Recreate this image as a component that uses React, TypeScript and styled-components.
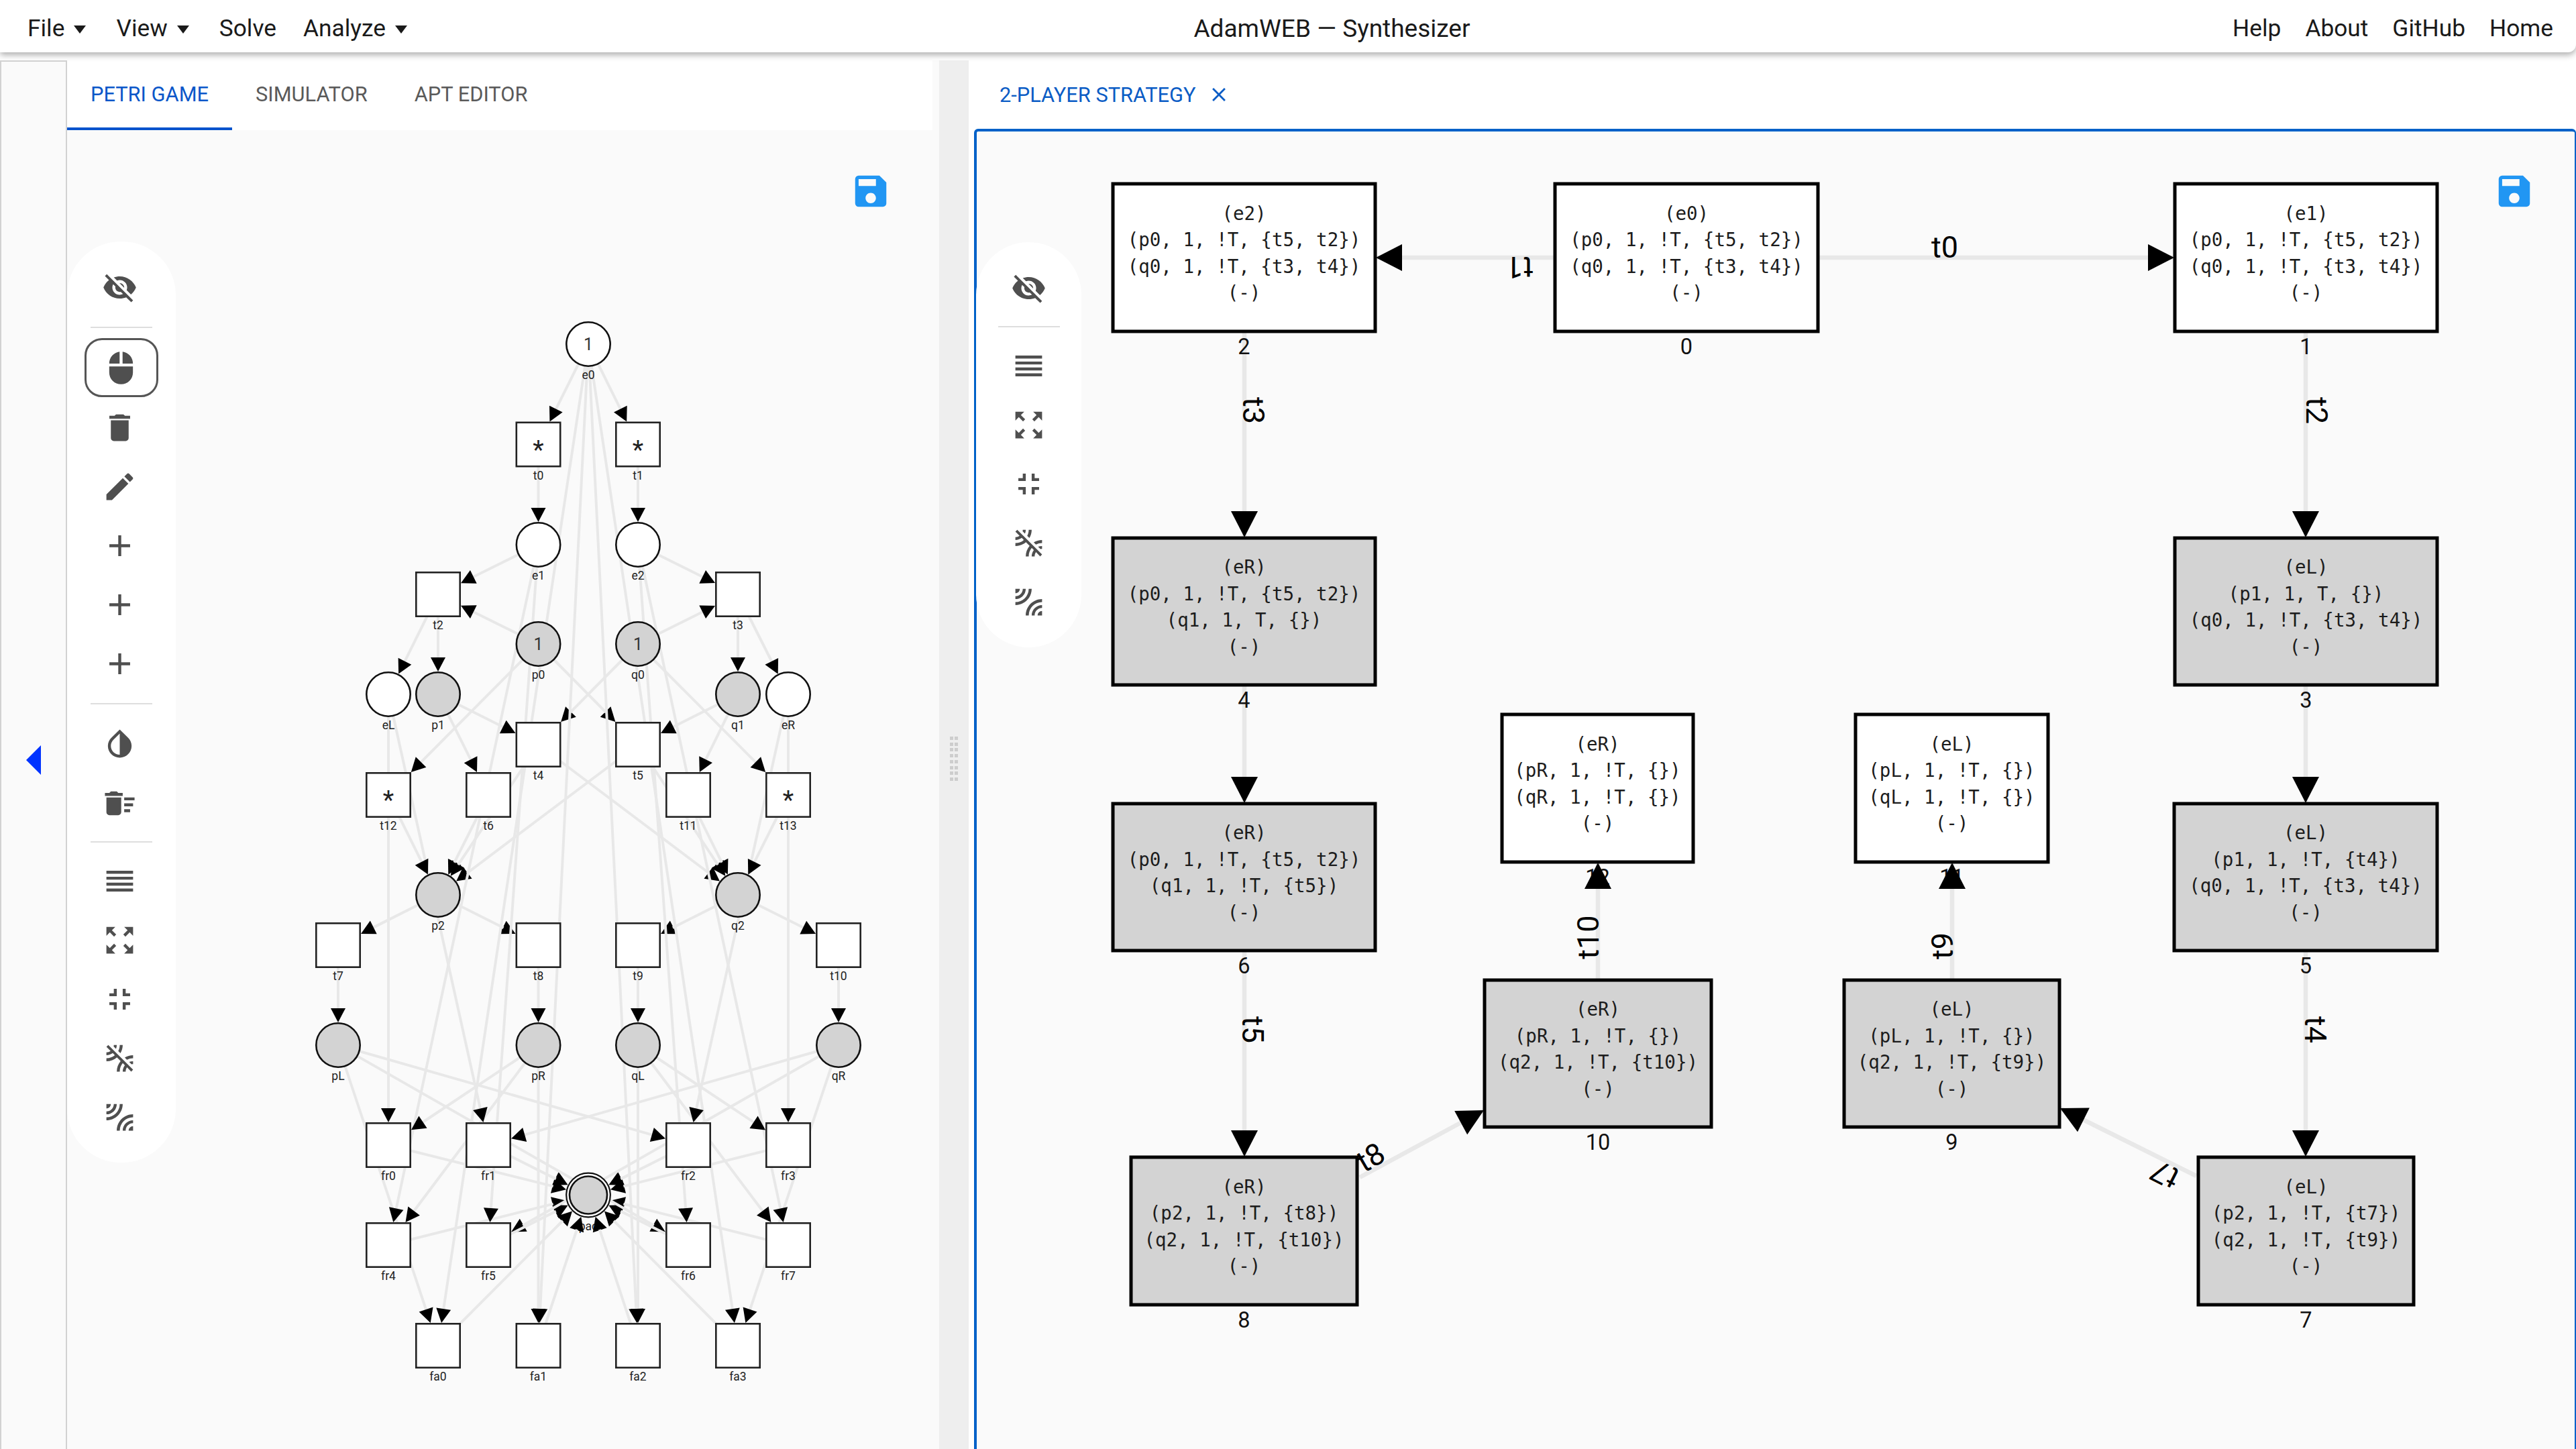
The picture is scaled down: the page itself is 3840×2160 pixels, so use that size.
import React from "react";
import styled, { createGlobalStyle } from "styled-components";
import {
  MdVisibilityOff, MdMouse, MdDelete, MdEdit, MdAdd, MdInvertColors, MdDeleteSweep,
  MdReorder, MdZoomOutMap, MdFullscreenExit, MdLeakRemove, MdLeakAdd, MdSave, MdClose,
} from "react-icons/md";

const Global = createGlobalStyle`
  html, body { margin: 0; padding: 0; width: 3840px; height: 2160px; overflow: hidden; background: #fff; }
  body { font-family: Roboto, "Liberation Sans", sans-serif; }
  #root { width: 3840px; height: 2160px; }
`;

const Page = styled.div`
  width: 3840px; height: 2160px; display: flex; flex-direction: column; overflow: hidden; background: #fff;
`;
const Header = styled.header`
  position: relative; z-index: 2; flex: 0 0 78px; box-sizing: border-box; padding: 6px 34px 0 41px;
  display: flex; align-items: center; justify-content: space-between;
  background: #fff; color: #1a1a1a; font-size: 35.3px;
  border-bottom-right-radius: 12px; box-shadow: 0 4px 10px rgba(0,0,0,.32);
`;
const MenuGroup = styled.nav<{ $gap: number }>` display: flex; align-items: center; gap: ${p => p.$gap}px; `;
const MenuItem = styled.span<{ $caret?: boolean; $after?: number }>`
  display: inline-flex; align-items: center; margin-right: ${p => p.$after ?? (p.$caret ? 8 : 0)}px;
`;
const Caret = styled.i`
  display: inline-block; margin-left: 14px; width: 0; height: 0; margin-top: 4px;
  border-left: 9px solid transparent; border-right: 9px solid transparent; border-top: 12px solid #1a1a1a;
`;
const Title = styled.span` font-size: 37px; margin-left: 28px; `;
const Body = styled.main` flex: 1; min-height: 0; display: flex; padding-top: 12px; `;
const LeftPane = styled.section` flex: 0 0 1400px; display: flex; `;
const Sidebar = styled.aside`
  flex: 0 0 100px; box-sizing: border-box; display: flex; align-items: center; justify-content: center; padding-top: 14px;
  background: #fafafa; border: 2px solid #d2d2d2; border-bottom: none;
`;
const CollapseArrow = styled.i`
  width: 0; height: 0; border-right: 22px solid #0033ff;
  border-top: 22px solid transparent; border-bottom: 22px solid transparent;
`;
const LeftColumn = styled.div` flex: 1; min-width: 0; display: flex; flex-direction: column; background: #fafafa; `;
const TabBar = styled.div<{ $h: number }>`
  flex: 0 0 ${p => p.$h}px; box-sizing: border-box; display: flex; background: #fff;
`;
const LeftTabBar = styled(TabBar)` margin-right: 10px; `;
const RightTabBar = styled(TabBar)` padding-left: 2px; `;
const Tab = styled.div<{ $active?: boolean }>`
  box-sizing: border-box; display: flex; align-items: center; gap: 24px; padding: 0 35px; font-size: 30.8px; font-weight: 400;
  color: ${p => (p.$active ? "#0b57c9" : "#5a5a5a")};
  border-bottom: 4px solid ${p => (p.$active ? "#0052cc" : "transparent")};
`;
const CleanTab = styled(Tab)` padding: 0 36px; gap: 17px; border-bottom: none; color: #0b5cc5; `;
const Canvas = styled.div`
  position: relative; flex: 1; min-height: 0; overflow: hidden; background: #fafafa;
`;
const Gutter = styled.div`
  flex: 0 0 44px; display: flex; align-items: center; justify-content: center; padding-top: 12px; background: #eeeeee;
`;
const Grip = styled.div` display: grid; grid-template-columns: 5px 5px; gap: 3.7px 2px; `;
const GripDot = styled.i` width: 5px; height: 5px; background: #cdcdcd; `;
const RightPane = styled.section` flex: 1; min-width: 0; box-sizing: border-box; padding-left: 8px; display: flex; flex-direction: column; background: #fff; `;
const RightCanvas = styled(Canvas)`
  border-top: 4px solid #0061c8; border-left: 4px solid #0061c8; border-right: 2px solid #0061c8;
  border-top-left-radius: 6px; border-top-right-radius: 6px; overflow: visible;
`;
const Toolbar = styled.div<{ $w: number; $top: number; $left: number; $nudge?: number }>`
  position: absolute; top: ${p => p.$top}px; left: ${p => p.$left}px; width: ${p => p.$w}px; box-sizing: border-box;
  padding: 24px ${p => p.$nudge ?? 0}px 24px 0; display: flex; flex-direction: column; align-items: center; background: #fff;
  border-radius: 80px; color: #4f4f4f;
`;
const ToolButton = styled.div<{ $selected?: boolean }>`
  box-sizing: border-box; width: 110px; height: 88px; display: flex; align-items: center; justify-content: center; flex: 0 0 88px;
  border-radius: 26px; border: 3px solid ${p => (p.$selected ? "#555" : "transparent")};
  margin-bottom: ${p => (p.$selected ? 1 : 0)}px;
  margin-left: ${p => (p.$selected ? 5 : 0)}px;
`;
const ToolDivider = styled.hr<{ $m?: number; $shift?: number }>`
  width: 92px; height: 2px; border: none; background: #dedede; flex: 0 0 2px;
  margin: ${p => p.$m ?? 15}px 0 ${p => p.$m ?? 15}px ${p => p.$shift ?? 0}px;
`;
const SaveButton = styled.div<{ $right: number; $top: number }>`
  position: absolute; right: ${p => p.$right}px; top: ${p => p.$top}px; color: #2196f3; line-height: 0;
`;
const Diagram = styled.svg` display: block; `;
const EdgeLine = styled.line<{ $w: number }>` stroke: #e8e8e8; stroke-width: ${p => p.$w}px; `;
const ArrowHead = styled.polygon` fill: #000; `;
const PlaceShape = styled.circle<{ $gray?: boolean }>`
  fill: ${p => (p.$gray ? "#d3d3d3" : "#fff")}; stroke: #111; stroke-width: 2.6px;
`;
const FinalRing = styled.circle` fill: #fff; stroke: #111; stroke-width: 2.2px; `;
const TransitionShape = styled.rect` fill: #fff; stroke: #222; stroke-width: 2.6px; `;
const NetLabel = styled.text`
  font-family: Roboto, sans-serif; font-size: 17.5px; fill: #222; text-anchor: middle;
`;
const NetToken = styled.text`
  font-family: Roboto, sans-serif; font-size: 25px; fill: #333; text-anchor: middle;
`;
const NetStar = styled.text`
  font-family: Roboto, sans-serif; font-size: 38px; fill: #222; text-anchor: middle;
`;
const StateBox = styled.rect<{ $gray?: boolean }>`
  fill: ${p => (p.$gray ? "#d3d3d3" : "#fff")}; stroke: #000; stroke-width: 5px;
`;
const StateLine = styled.text`
  font-family: "DejaVu Sans Mono", "Liberation Mono", monospace; font-size: 27.5px; fill: #1c1c1c; text-anchor: middle;
`;
const StateIndex = styled.text`
  font-family: Roboto, sans-serif; font-size: 32.5px; fill: #111; text-anchor: middle;
`;
const EdgeCaption = styled.text`
  font-family: Roboto, sans-serif; font-size: 45px; fill: #000; text-anchor: middle;
`;

type Kind = "c" | "s";
type NetNode = { id: string; x: number; y: number; k: Kind; gray?: boolean; text?: string };
const X = { a: 504, b: 579, c: 653, d: 728, e: 802.5, f: 877, g: 951, h: 1026, i: 1100, j: 1175, k: 1250 };
const netNodes: NetNode[] = [
  { id: "e0", x: X.f, y: 513, k: "c", text: "1" },
  { id: "t0", x: X.e, y: 662.5, k: "s", text: "*" }, { id: "t1", x: X.g, y: 662.5, k: "s", text: "*" },
  { id: "e1", x: X.e, y: 812, k: "c" }, { id: "e2", x: X.g, y: 812, k: "c" },
  { id: "t2", x: X.c, y: 886, k: "s" }, { id: "t3", x: X.i, y: 886, k: "s" },
  { id: "p0", x: X.e, y: 960, k: "c", gray: true, text: "1" }, { id: "q0", x: X.g, y: 960, k: "c", gray: true, text: "1" },
  { id: "eL", x: X.b, y: 1035, k: "c" }, { id: "p1", x: X.c, y: 1035, k: "c", gray: true },
  { id: "q1", x: X.i, y: 1035, k: "c", gray: true }, { id: "eR", x: X.j, y: 1035, k: "c" },
  { id: "t4", x: X.e, y: 1110, k: "s" }, { id: "t5", x: X.g, y: 1110, k: "s" },
  { id: "t12", x: X.b, y: 1185, k: "s", text: "*" }, { id: "t6", x: X.d, y: 1185, k: "s" },
  { id: "t11", x: X.h, y: 1185, k: "s" }, { id: "t13", x: X.j, y: 1185, k: "s", text: "*" },
  { id: "p2", x: X.c, y: 1334, k: "c", gray: true }, { id: "q2", x: X.i, y: 1334, k: "c", gray: true },
  { id: "t7", x: X.a, y: 1409, k: "s" }, { id: "t8", x: X.e, y: 1409, k: "s" },
  { id: "t9", x: X.g, y: 1409, k: "s" }, { id: "t10", x: X.k, y: 1409, k: "s" },
  { id: "pL", x: X.a, y: 1558, k: "c", gray: true }, { id: "pR", x: X.e, y: 1558, k: "c", gray: true },
  { id: "qL", x: X.g, y: 1558, k: "c", gray: true }, { id: "qR", x: X.k, y: 1558, k: "c", gray: true },
  { id: "fr0", x: X.b, y: 1707, k: "s" }, { id: "fr1", x: X.d, y: 1707, k: "s" },
  { id: "fr2", x: X.h, y: 1707, k: "s" }, { id: "fr3", x: X.j, y: 1707, k: "s" },
  { id: "pac", x: X.f, y: 1781.5, k: "c", gray: true },
  { id: "fr4", x: X.b, y: 1856, k: "s" }, { id: "fr5", x: X.d, y: 1856, k: "s" },
  { id: "fr6", x: X.h, y: 1856, k: "s" }, { id: "fr7", x: X.j, y: 1856, k: "s" },
  { id: "fa0", x: X.c, y: 2006, k: "s" }, { id: "fa1", x: X.e, y: 2006, k: "s" },
  { id: "fa2", x: X.g, y: 2006, k: "s" }, { id: "fa3", x: X.i, y: 2006, k: "s" },
];
const netEdges: string[] = [
  "e0 t0","e0 t1","t0 e1","t1 e2","e1 t2","e2 t3","p0 t2","q0 t3","t2 eL","t2 p1","t3 q1","t3 eR",
  "e0 fa0","e0 fa1","e0 fa2","e0 fa3","e1 fr4","e1 fr5","e2 fr7","e2 fr6",
  "p0 t12","p0 t5","q0 t13","q0 t4","p1 t4","p1 t6","q1 t5","q1 t11",
  "eL fr0","eR fr3","eL fr1","eR fr2","t12 p2","t13 q2","t6 p2","t11 q2","t4 p2","t4 q2","t5 p2","t5 q2",
  "p2 t7","p2 t8","q2 t9","q2 t10","t7 pL","t8 pR","t9 qL","t10 qR",
  "pL fr2","pL fr6","pL fa0","pR fr0","pR fr4","pR fa1","qL fr3","qL fr7","qL fa2","qR fr1","qR fr5","qR fa3",
  "fr0 pac","fr1 pac","fr2 pac","fr3 pac","fr4 pac","fr5 pac","fr6 pac","fr7 pac","fa0 pac","fa1 pac","fa2 pac","fa3 pac",
];
// Arrow heads that other edges run across in the picture; every other head sits on top of the lines.
const crossedArrows = new Set([
  "q0 t4","p0 t5","p2 t8","q2 t9","t4 p2","t5 p2","t6 p2","t4 q2","t5 q2","t11 q2","qR fr5","pL fr6",
  "fr0 pac","fr1 pac","fr2 pac","fr3 pac","fr4 pac","fr5 pac","fr6 pac","fr7 pac","fa0 pac","fa1 pac","fa2 pac","fa3 pac",
]);
const byId = Object.fromEntries(netNodes.map(n => [n.id, n]));

function arrowPoints(tx: number, ty: number, ux: number, uy: number, len: number, half: number) {
  const bx = tx - ux * len, by = ty - uy * len;
  return `${tx},${ty} ${bx - uy * half},${by + ux * half} ${bx + uy * half},${by - ux * half}`;
}

const ARROW = 21;
const netGeometry = netEdges.map(e => {
  const [a, b] = e.split(" ").map(id => byId[id]);
  const dx = b.x - a.x, dy = b.y - a.y, L = Math.hypot(dx, dy), ux = dx / L, uy = dy / L;
  const t = b.k === "c" ? 34 : Math.min(34 / Math.abs(ux || 1e-6), 34 / Math.abs(uy || 1e-6));
  const tx = b.x - ux * t, ty = b.y - uy * t;
  return {
    key: e, x1: a.x, y1: a.y, x2: tx - ux * (ARROW - 1), y2: ty - uy * (ARROW - 1),
    arrow: arrowPoints(tx, ty, ux, uy, ARROW, 11),
  };
});

function PetriNet() {
  const pac = byId["pac"];
  return (
    <Diagram width={1300} height={1966} viewBox="100 194 1300 1966">
      <NetLabel x={pac.x} y={pac.y + 52}>pac</NetLabel>
      {netGeometry.filter(g => crossedArrows.has(g.key)).map(g => <ArrowHead key={g.key} points={g.arrow} />)}
      {netGeometry.map(g => <EdgeLine key={g.key} $w={4} x1={g.x1} y1={g.y1} x2={g.x2} y2={g.y2} />)}
      {netGeometry.filter(g => !crossedArrows.has(g.key)).map(g => <ArrowHead key={g.key} points={g.arrow} />)}
      {netNodes.map(n => (
        <g key={n.id}>
          {n.k === "c" ? (
            n.id === "pac" ? (
              <>
                <FinalRing cx={n.x} cy={n.y} r={32.8} />
                <PlaceShape $gray cx={n.x} cy={n.y} r={28} />
              </>
            ) : (
              <PlaceShape $gray={n.gray} cx={n.x} cy={n.y} r={32.7} />
            )
          ) : (
            <TransitionShape x={n.x - 32.7} y={n.y - 32.7} width={65.4} height={65.4} />
          )}
          {n.text === "1" && <NetToken x={n.x} y={n.y + 9}>1</NetToken>}
          {n.text === "*" && <NetStar x={n.x} y={n.y + 21}>*</NetStar>}
          {n.id !== "pac" && <NetLabel x={n.x} y={n.y + 52}>{n.id}</NetLabel>}
        </g>
      ))}
    </Diagram>
  );
}

type StateNode = { x0: number; y0: number; x1: number; y1: number; gray?: boolean; index: string; lines: string[] };
const states: StateNode[] = [
  { x0: 2317, y0: 273, x1: 2711, y1: 495, index: "0", lines: ["(e0)", "(p0, 1, !T, {t5, t2})", "(q0, 1, !T, {t3, t4})", "(-)"] },
  { x0: 3241, y0: 273, x1: 3634, y1: 495, index: "1", lines: ["(e1)", "(p0, 1, !T, {t5, t2})", "(q0, 1, !T, {t3, t4})", "(-)"] },
  { x0: 1658, y0: 273, x1: 2051, y1: 495, index: "2", lines: ["(e2)", "(p0, 1, !T, {t5, t2})", "(q0, 1, !T, {t3, t4})", "(-)"] },
  { x0: 3241, y0: 801, x1: 3634, y1: 1022, gray: true, index: "3", lines: ["(eL)", "(p1, 1, T, {})", "(q0, 1, !T, {t3, t4})", "(-)"] },
  { x0: 1658, y0: 801, x1: 2051, y1: 1022, gray: true, index: "4", lines: ["(eR)", "(p0, 1, !T, {t5, t2})", "(q1, 1, T, {})", "(-)"] },
  { x0: 3240, y0: 1197, x1: 3634, y1: 1418, gray: true, index: "5", lines: ["(eL)", "(p1, 1, !T, {t4})", "(q0, 1, !T, {t3, t4})", "(-)"] },
  { x0: 1658, y0: 1197, x1: 2051, y1: 1418, gray: true, index: "6", lines: ["(eR)", "(p0, 1, !T, {t5, t2})", "(q1, 1, !T, {t5})", "(-)"] },
  { x0: 3276, y0: 1724, x1: 3599, y1: 1946, gray: true, index: "7", lines: ["(eL)", "(p2, 1, !T, {t7})", "(q2, 1, !T, {t9})", "(-)"] },
  { x0: 1685, y0: 1724, x1: 2024, y1: 1946, gray: true, index: "8", lines: ["(eR)", "(p2, 1, !T, {t8})", "(q2, 1, !T, {t10})", "(-)"] },
  { x0: 2748, y0: 1460, x1: 3071, y1: 1681, gray: true, index: "9", lines: ["(eL)", "(pL, 1, !T, {})", "(q2, 1, !T, {t9})", "(-)"] },
  { x0: 2212, y0: 1460, x1: 2552, y1: 1681, gray: true, index: "10", lines: ["(eR)", "(pR, 1, !T, {})", "(q2, 1, !T, {t10})", "(-)"] },
  { x0: 2765, y0: 1064, x1: 3054, y1: 1286, index: "11", lines: ["(eL)", "(pL, 1, !T, {})", "(qL, 1, !T, {})", "(-)"] },
  { x0: 2238, y0: 1064, x1: 2525, y1: 1286, index: "12", lines: ["(eR)", "(pR, 1, !T, {})", "(qR, 1, !T, {})", "(-)"] },
];
const strategyEdges = [
  { a: [2711, 384], b: [3241, 384] }, { a: [2317, 384], b: [2051, 384] },
  { a: [1855, 495], b: [1855, 801] }, { a: [3437, 495], b: [3437, 801] },
  { a: [1855, 1021], b: [1855, 1197] }, { a: [3437, 1021], b: [3437, 1197] },
  { a: [1855, 1418], b: [1855, 1724] }, { a: [3437, 1418], b: [3437, 1724] },
  { a: [2382, 1460], b: [2382, 1286] }, { a: [2910, 1460], b: [2910, 1286] },
  { a: [2027, 1755], b: [2212, 1655] }, { a: [3274, 1753], b: [3071, 1652] },
];
const captions = [
  { t: "t0", x: 2899, y: 368, r: 0 }, { t: "t1", x: 2265, y: 399, r: 180 },
  { t: "t3", x: 1869, y: 612, r: 90 }, { t: "t2", x: 3454, y: 612, r: 90 },
  { t: "t5", x: 1868, y: 1535, r: 90 }, { t: "t4", x: 3452, y: 1535, r: 90 },
  { t: "t10", x: 2367, y: 1397, r: -90 }, { t: "t9", x: 2895, y: 1410, r: -90 },
  { t: "t8", x: 2043, y: 1725, r: -30 }, { t: "t7", x: 3227, y: 1751, r: 207 },
];

function Strategy() {
  return (
    <Diagram width={2384} height={1964} viewBox="1456 196 2384 1964">
      {strategyEdges.map((e, i) => <EdgeLine key={i} $w={6.5} x1={e.a[0]} y1={e.a[1]} x2={e.b[0]} y2={e.b[1]} />)}
      {states.map(s => {
        const cx = (s.x0 + s.x1) / 2, cy = (s.y0 + s.y1) / 2;
        return (
          <g key={s.index}>
            <StateBox $gray={s.gray} x={s.x0 + 1} y={s.y0 + 1} width={s.x1 - s.x0 - 2} height={s.y1 - s.y0 - 2} />
            {s.lines.map((l, i) => (
              <StateLine key={i} x={cx} y={cy - 56.5 + i * 39.6} xmlSpace="preserve">{l}</StateLine>
            ))}
            <StateIndex x={cx} y={s.y1 + 33}>{s.index}</StateIndex>
          </g>
        );
      })}
      {strategyEdges.map((e, i) => {
        const dx = e.b[0] - e.a[0], dy = e.b[1] - e.a[1], L = Math.hypot(dx, dy);
        return <ArrowHead key={i} points={arrowPoints(e.b[0], e.b[1], dx / L, dy / L, 39, 20)} />;
      })}
      {captions.map(c => (
        <EdgeCaption key={c.t} x={c.x} y={c.y} dy=".35em" transform={`rotate(${c.r} ${c.x} ${c.y})`}>{c.t}</EdgeCaption>
      ))}
    </Diagram>
  );
}

const ICON = 53;
function ViewTools() {
  return (
    <>
      <ToolButton><MdReorder size={ICON} /></ToolButton>
      <ToolButton><MdZoomOutMap size={ICON} /></ToolButton>
      <ToolButton><MdFullscreenExit size={ICON} /></ToolButton>
      <ToolButton><MdLeakRemove size={ICON} /></ToolButton>
      <ToolButton><MdLeakAdd size={ICON} /></ToolButton>
    </>
  );
}

export default function App() {
  return (
    <Page>
      <Global />
      <Header>
        <MenuGroup $gap={37}>
          <MenuItem $caret>File<Caret /></MenuItem>
          <MenuItem $caret>View<Caret /></MenuItem>
          <MenuItem $after={3}>Solve</MenuItem>
          <MenuItem $caret>Analyze<Caret /></MenuItem>
        </MenuGroup>
        <Title>AdamWEB — Synthesizer</Title>
        <MenuGroup $gap={36}>
          <MenuItem>Help</MenuItem>
          <MenuItem>About</MenuItem>
          <MenuItem>GitHub</MenuItem>
          <MenuItem>Home</MenuItem>
        </MenuGroup>
      </Header>
      <Body>
        <LeftPane>
          <Sidebar><CollapseArrow /></Sidebar>
          <LeftColumn>
            <LeftTabBar $h={104}>
              <Tab $active>PETRI GAME</Tab>
              <Tab>SIMULATOR</Tab>
              <Tab>APT EDITOR</Tab>
            </LeftTabBar>
            <Canvas>
              <PetriNet />
              <SaveButton $right={71} $top={60}><MdSave size={62} /></SaveButton>
              <Toolbar $w={162} $top={166} $left={0} $nudge={6}>
                <ToolButton><MdVisibilityOff size={ICON} /></ToolButton>
                <ToolDivider $shift={6} />
                <ToolButton $selected><MdMouse size={ICON} /></ToolButton>
                <ToolButton><MdDelete size={ICON} /></ToolButton>
                <ToolButton><MdEdit size={ICON} /></ToolButton>
                <ToolButton><MdAdd size={ICON} /></ToolButton>
                <ToolButton><MdAdd size={ICON} /></ToolButton>
                <ToolButton><MdAdd size={ICON} /></ToolButton>
                <ToolDivider $shift={6} />
                <ToolButton><MdInvertColors size={ICON} /></ToolButton>
                <ToolButton><MdDeleteSweep size={ICON} /></ToolButton>
                <ToolDivider $m={13} $shift={6} />
                <ViewTools />
              </Toolbar>
            </Canvas>
          </LeftColumn>
        </LeftPane>
        <Gutter>
          <Grip>{Array.from({ length: 16 }, (_, i) => <GripDot key={i} />)}</Grip>
        </Gutter>
        <RightPane>
          <RightTabBar $h={102}>
            <CleanTab>2-PLAYER STRATEGY<MdClose size={34} /></CleanTab>
          </RightTabBar>
          <RightCanvas>
            <Strategy />
            <SaveButton $right={59} $top={58}><MdSave size={62} /></SaveButton>
            <Toolbar $w={157} $top={165} $left={-1}>
              <ToolButton><MdVisibilityOff size={ICON} /></ToolButton>
              <ToolDivider $m={13} />
              <ViewTools />
            </Toolbar>
          </RightCanvas>
        </RightPane>
      </Body>
    </Page>
  );
}
